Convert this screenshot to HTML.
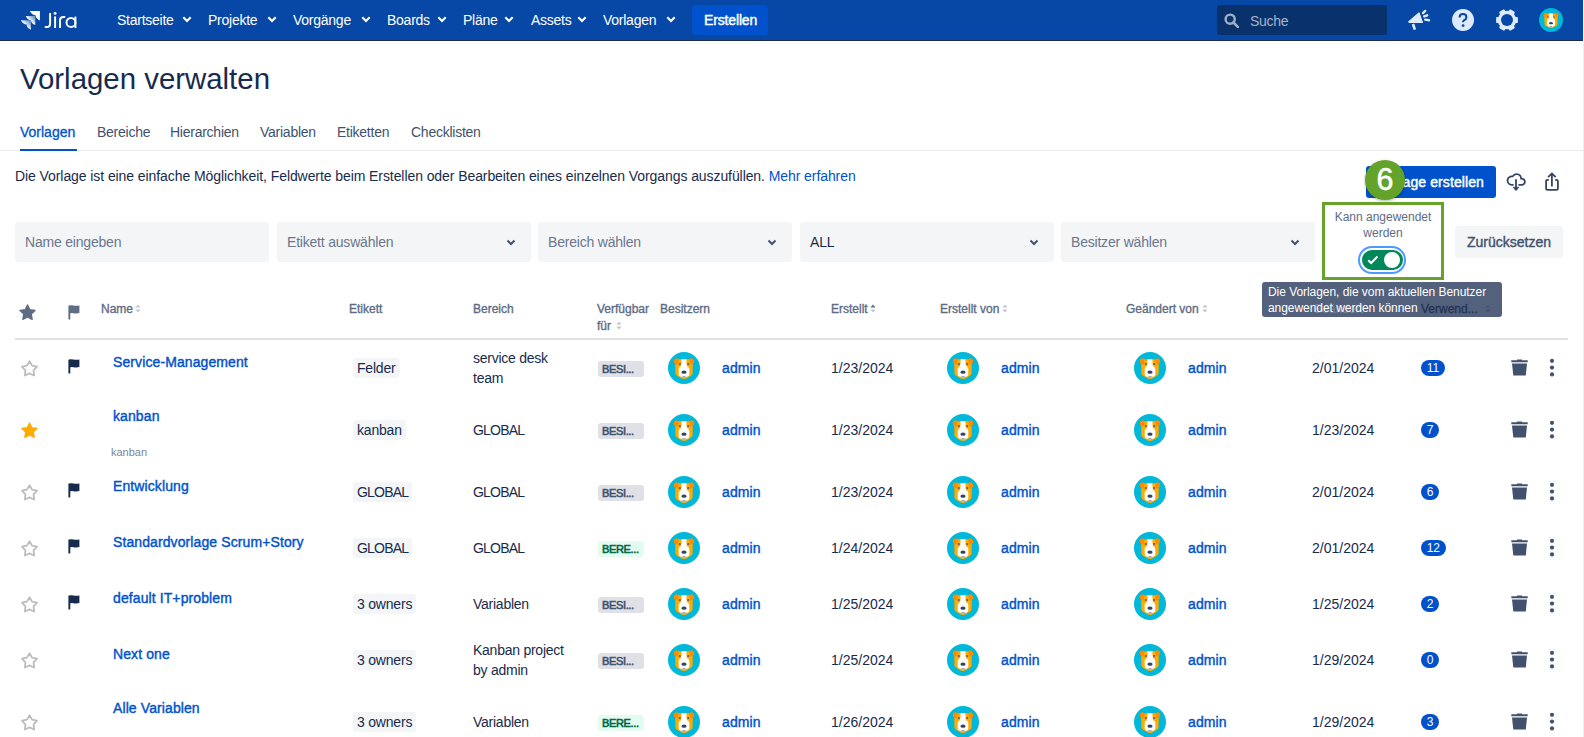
<!DOCTYPE html>
<html><head><meta charset="utf-8">
<style>
*{box-sizing:border-box;margin:0;padding:0}
html,body{width:1584px;height:737px;overflow:hidden;background:#fff;font-family:"Liberation Sans",sans-serif;color:#172B4D}
.a{position:absolute;white-space:nowrap}
#hdr{position:absolute;left:0;top:0;width:1583px;height:41px;background:#0747A6;border-bottom:1px solid #1a2d50}
.nav{position:absolute;top:12px;font-size:14px;color:#fff;line-height:16px}
.chev{position:absolute;top:16.4px}
#vscroll{position:absolute;left:1583px;top:41px;width:1px;height:696px;background:#eeeeee}
.title{left:20px;top:62px;font-size:29.4px;line-height:34px;color:#172B4D}
.tab{top:124px;font-size:14px;line-height:16px;color:#42526E;letter-spacing:-0.25px}
.desc{left:15px;top:168px;font-size:14px;line-height:16px;color:#172B4D;letter-spacing:-0.08px}
.box{position:absolute;top:222px;height:40px;width:254px;background:#F4F5F7;border-radius:3px}
.ph{position:absolute;left:10px;top:12px;font-size:14px;line-height:16px;color:#6B778C;white-space:nowrap;letter-spacing:-0.2px}
.bchev{position:absolute;right:15px;top:17px}

.th{font-size:12px;line-height:14px;color:#5E6C84;-webkit-text-stroke:0.35px #5E6C84}
.nm{font-size:14px;line-height:16px;color:#0052CC;-webkit-text-stroke:0.4px #0052CC;letter-spacing:0.1px}
.sub{font-size:11px;line-height:13px;color:#7A869A}
.td{font-size:14px;line-height:20px;color:#172B4D;letter-spacing:-0.25px}
.dt{font-size:14px;line-height:16px;color:#172B4D}
.usr{font-size:14px;line-height:16px;color:#0052CC;-webkit-text-stroke:0.4px #0052CC;letter-spacing:0.1px}
.tag{height:20px;padding:0 4px;letter-spacing:-0.2px;background:#F4F5F7;border-radius:3px;font-size:14px;line-height:20px;color:#172B4D}
.lz{height:16px;width:46px;padding-left:4px;background:#DFE1E6;border-radius:3px;font-size:11px;line-height:16px;color:#42526E;letter-spacing:-0.35px;-webkit-text-stroke:0.6px #42526E}
.lz.gr{background:#E3FCEF;color:#006644;-webkit-text-stroke:0.6px #006644}
.badge{height:16px;min-width:18px;padding:0 5.7px;background:#0052CC;border-radius:8px;font-size:12px;line-height:16px;color:#fff;text-align:center}
</style></head><body>
<div id="hdr">
  <!-- logo -->
  <svg class="a" style="left:18px;top:8px" width="26" height="26" viewBox="18 8 26 26">
    <defs><linearGradient id="lg" x1="0" y1="1" x2="1" y2="0"><stop offset="0.45" stop-color="#fff"/><stop offset="0.85" stop-color="#fff" stop-opacity="0.45"/></linearGradient></defs>
    <path d="M29.9 11.0 H39.9 V20.5 C37.3 19.3 35.7 17.8 35.6 15.3 C33.1 15.2 31.1 13.6 29.9 11.0 Z" fill="#fff"/><path d="M25.7 15.9 H35.3 V25.1 C32.7 23.9 31.1 22.7 31.0 20.2 C28.5 20.1 26.9 18.5 25.7 15.9 Z" fill="url(#lg)"/><path d="M20.9 20.2 H30.9 V29.8 C28.3 28.6 26.7 27.0 26.6 24.5 C24.1 24.4 22.1 22.8 20.9 20.2 Z" fill="url(#lg)"/>
  </svg>
  <svg class="a" style="left:40px;top:6px" width="42" height="26" viewBox="40 6 42 26">
    <g fill="none" stroke="#fff" stroke-width="1.95">
      <path d="M50.1 12.9 V23.4 Q50.1 27 46.6 27 H44.8"/>
      <path d="M55.1 16.4 V28"/>
      <path d="M60 28 V20.4 Q60 16.9 63.6 16.9 H65.2"/>
      <circle cx="71" cy="22.4" r="4.5"/>
      <path d="M75.4 16.6 V28"/>
    </g>
    <circle cx="55.1" cy="13.4" r="1.45" fill="#fff"/>
  </svg>

  <div class="a nav" style="left:117px;letter-spacing:-0.25px">Startseite</div>
  <div class="a nav" style="left:208px;letter-spacing:-0.25px">Projekte</div>
  <div class="a nav" style="left:293px;letter-spacing:-0.25px">Vorgänge</div>
  <div class="a nav" style="left:387px;letter-spacing:-0.25px">Boards</div>
  <div class="a nav" style="left:463px;letter-spacing:-0.25px">Pläne</div>
  <div class="a nav" style="left:531px;letter-spacing:-0.25px">Assets</div>
  <div class="a nav" style="left:603px;letter-spacing:-0.25px">Vorlagen</div>
  <svg class="chev" style="left:182px" width="10" height="7" viewBox="0 0 10 7"><path d="M1.3 1.3L5 5l3.7-3.7" stroke="#fff" stroke-width="2.1" fill="none"/></svg>
  <svg class="chev" style="left:267px" width="10" height="7" viewBox="0 0 10 7"><path d="M1.3 1.3L5 5l3.7-3.7" stroke="#fff" stroke-width="2.1" fill="none"/></svg>
  <svg class="chev" style="left:361px" width="10" height="7" viewBox="0 0 10 7"><path d="M1.3 1.3L5 5l3.7-3.7" stroke="#fff" stroke-width="2.1" fill="none"/></svg>
  <svg class="chev" style="left:437px" width="10" height="7" viewBox="0 0 10 7"><path d="M1.3 1.3L5 5l3.7-3.7" stroke="#fff" stroke-width="2.1" fill="none"/></svg>
  <svg class="chev" style="left:504px" width="10" height="7" viewBox="0 0 10 7"><path d="M1.3 1.3L5 5l3.7-3.7" stroke="#fff" stroke-width="2.1" fill="none"/></svg>
  <svg class="chev" style="left:577px" width="10" height="7" viewBox="0 0 10 7"><path d="M1.3 1.3L5 5l3.7-3.7" stroke="#fff" stroke-width="2.1" fill="none"/></svg>
  <svg class="chev" style="left:666px" width="10" height="7" viewBox="0 0 10 7"><path d="M1.3 1.3L5 5l3.7-3.7" stroke="#fff" stroke-width="2.1" fill="none"/></svg>
  <div class="a" style="left:692px;top:5px;width:76px;height:30px;background:#0052CC;border-radius:3px"></div>
  <div class="a nav" style="left:704px;letter-spacing:-0.15px;-webkit-text-stroke:0.45px #fff">Erstellen</div>

  <!-- search -->
  <div class="a" style="left:1217px;top:5px;width:170px;height:30px;background:#09326C;border-radius:3px"></div>
  <svg class="a" style="left:1224px;top:13px" width="16" height="15" viewBox="0 0 16 15"><circle cx="6.2" cy="6.2" r="4.6" stroke="#9FB0C8" stroke-width="2.4" fill="none"/><path d="M9.5 9.5l4.3 4.3" stroke="#9FB0C8" stroke-width="2.6" stroke-linecap="round"/></svg>
  <div class="a nav" style="left:1250px;top:13px;color:#A5B3C9;letter-spacing:-0.3px">Suche</div>
</div>
<div id="vscroll"></div>

<div class="a title">Vorlagen verwalten</div>
<div class="a tab" style="left:20px;color:#0052CC;letter-spacing:0;-webkit-text-stroke:0.3px #0052CC">Vorlagen</div>
<div class="a tab" style="left:97px">Bereiche</div>
<div class="a tab" style="left:170px">Hierarchien</div>
<div class="a tab" style="left:260px">Variablen</div>
<div class="a tab" style="left:337px">Etiketten</div>
<div class="a tab" style="left:411px">Checklisten</div>
<div class="a" style="left:0;top:149.6px;width:1583px;height:1.8px;background:#EBECF0"></div>
<div class="a" style="left:20px;top:148.8px;width:57px;height:2.6px;background:#0052CC"></div>

<div class="a desc">Die Vorlage ist eine einfache Möglichkeit, Feldwerte beim Erstellen oder Bearbeiten eines einzelnen Vorgangs auszufüllen. <span style="color:#0052CC">Mehr erfahren</span></div>

<div class="box" style="left:15px"><div class="ph">Name eingeben</div></div>
<div class="box" style="left:277px"><div class="ph">Etikett auswählen</div><svg class="bchev" width="10" height="7" viewBox="0 0 10 7"><path d="M1.5 1.5L5 5l3.5-3.5" stroke="#42526E" stroke-width="2" fill="none"/></svg></div>
<div class="box" style="left:538px"><div class="ph">Bereich wählen</div><svg class="bchev" width="10" height="7" viewBox="0 0 10 7"><path d="M1.5 1.5L5 5l3.5-3.5" stroke="#42526E" stroke-width="2" fill="none"/></svg></div>
<div class="box" style="left:800px"><div class="ph" style="color:#172B4D">ALL</div><svg class="bchev" width="10" height="7" viewBox="0 0 10 7"><path d="M1.5 1.5L5 5l3.5-3.5" stroke="#42526E" stroke-width="2" fill="none"/></svg></div>
<div class="box" style="left:1061px"><div class="ph">Besitzer wählen</div><svg class="bchev" width="10" height="7" viewBox="0 0 10 7"><path d="M1.5 1.5L5 5l3.5-3.5" stroke="#42526E" stroke-width="2" fill="none"/></svg></div>


<!-- header right icons -->
<svg class="a" style="left:1407px;top:9px" width="24" height="22" viewBox="0 0 24 22">
  <path d="M1.8 12.6 L12 4 L15.4 13.4 L2.2 13.4 Z" fill="#DEEBFF" stroke="#DEEBFF" stroke-width="1.2" stroke-linejoin="round"/>
  <path d="M6 15 L7.9 20.6" stroke="#DEEBFF" stroke-width="2.6" stroke-linecap="butt"/>
  <path d="M16 4.2 L18.2 1.9 M17.2 7.4 L20.2 6.3 M18.2 10.6 L22 11.2" stroke="#DEEBFF" stroke-width="2.4" stroke-linecap="round"/>
</svg>
<svg class="a" style="left:1452px;top:9px" width="22" height="22" viewBox="0 0 22 22">
  <circle cx="11" cy="11" r="11" fill="#DEEBFF"/>
  <path d="M7.6 8.4 Q7.6 5 11 5 Q14.4 5 14.4 8.2 Q14.4 10.2 12.2 11.2 Q11.1 11.8 11.1 13.2" stroke="#0747A6" stroke-width="2" fill="none" stroke-linecap="butt"/>
  <circle cx="11.1" cy="16.6" r="1.4" fill="#0747A6"/>
</svg>
<svg class="a" style="left:1496px;top:9px" width="22" height="22" viewBox="0 0 22 22">
  <g fill="#DEEBFF"><rect x="7.9" y="0.1" width="6.2" height="4.5" rx="1.2" transform="rotate(30 11 11)"/><rect x="7.9" y="0.1" width="6.2" height="4.5" rx="1.2" transform="rotate(90 11 11)"/><rect x="7.9" y="0.1" width="6.2" height="4.5" rx="1.2" transform="rotate(150 11 11)"/><rect x="7.9" y="0.1" width="6.2" height="4.5" rx="1.2" transform="rotate(210 11 11)"/><rect x="7.9" y="0.1" width="6.2" height="4.5" rx="1.2" transform="rotate(270 11 11)"/><rect x="7.9" y="0.1" width="6.2" height="4.5" rx="1.2" transform="rotate(330 11 11)"/><circle cx="11" cy="11" r="9.2"/></g>
  <circle cx="11" cy="11" r="6" fill="#0747A6"/>
</svg>
<svg class="a" style="left:1539px;top:8px" width="24" height="24" viewBox="0 0 32 32"><use href="#dog"/></svg>

<!-- toolbar -->
<div class="a" style="left:1366px;top:166px;width:130px;height:32px;background:#0052CC;border-radius:3px"></div>
<div class="a" style="left:1378px;top:174px;font-size:14px;line-height:16px;color:#fff;letter-spacing:0.1px;-webkit-text-stroke:0.45px #fff">Vorlage erstellen</div>
<div class="a" style="left:1365px;top:160px;width:40px;height:40px;border-radius:50%;background:#64A32A;box-shadow:0 1px 3px rgba(0,0,0,0.3)"></div>
<div class="a" style="left:1365px;top:161.3px;width:40px;text-align:center;font-size:30.5px;line-height:36px;color:#fff;-webkit-text-stroke:0.5px #fff">6</div>
<svg class="a" style="left:1505px;top:172px" width="22" height="20" viewBox="0 0 22 20">
  <path d="M8.6 12.9 H6.8 A4.3 4.3 0 1 1 7.68 4.39 A4.5 4.5 0 0 1 16.10 6.66 A3.15 3.15 0 1 1 16.7 12.9 H13.4" fill="none" stroke="#344563" stroke-width="1.8" stroke-linejoin="round"/>
  <path d="M11 7.2 V16" stroke="#344563" stroke-width="1.8"/>
  <path d="M8 15.2 H14 L11 18.8 Z" fill="#344563" stroke="#344563" stroke-width="0.6" stroke-linejoin="round"/>
</svg>
<svg class="a" style="left:1544px;top:172px" width="16" height="20" viewBox="0 0 16 20">
  <path d="M4.8 7.9 H3.4 Q2.1 7.9 2.1 9.2 V16.5 Q2.1 17.8 3.4 17.8 H12.6 Q13.9 17.8 13.9 16.5 V9.2 Q13.9 7.9 12.6 7.9 H11.2" fill="none" stroke="#344563" stroke-width="1.8"/>
  <path d="M7.9 14.6 V2" stroke="#344563" stroke-width="1.8"/>
  <path d="M4.1 5.2 L7.9 1.4 L11.7 5.2" fill="none" stroke="#344563" stroke-width="1.8"/>
</svg>

<div class="a" style="left:1322px;top:202px;width:122px;height:78px;border:3px solid #65A32A"></div>
<div class="a" style="left:1322px;top:209px;width:122px;text-align:center;white-space:normal;font-size:12px;line-height:16px;color:#5E6C84">Kann angewendet<br>werden</div>
<div class="a" style="left:1358px;top:246px;width:48px;height:28px;border:2px solid #4C9AFF;border-radius:14px"></div>
<div class="a" style="left:1361.5px;top:250px;width:41px;height:20px;background:#00875A;border-radius:10px"></div>
<div class="a" style="left:1384px;top:252px;width:16px;height:16px;background:#fff;border-radius:50%"></div>
<svg class="a" style="left:1367px;top:255px" width="12" height="10" viewBox="0 0 12 10"><path d="M1.2 5.2 L4.2 8 L10.5 1.5" fill="none" stroke="#fff" stroke-width="2"/></svg>

<div class="a" style="left:1455px;top:226px;width:108px;height:32px;background:#F4F5F7;border-radius:3px"></div>
<div class="a" style="left:1467px;top:234px;font-size:14px;line-height:16px;color:#42526E;-webkit-text-stroke:0.4px #42526E">Zurücksetzen</div>
<svg width="0" height="0" style="position:absolute"><defs><symbol id="dog" viewBox="0 0 32 32">
<circle cx="16" cy="16" r="16" fill="#00B8D9"/>
<path d="M7.2 9 Q7.4 7.2 10 7.2 H22 Q24.6 7.2 24.8 9 L24.6 21.6 Q24.4 23 22.6 24 L19.9 25.4 Q16 28.8 12.1 25.4 L9.4 24 Q7.6 23 7.4 21.6 Z" fill="#FFAB00"/>
<path d="M5.8 9.6 Q5.6 6.5 8.8 6.3 Q10.3 6.4 10.7 7.6 L9.8 12.4 Q6.2 12.5 5.8 9.6 Z M26.2 9.6 Q26.4 6.5 23.2 6.3 Q21.7 6.4 21.3 7.6 L22.2 12.4 Q25.8 12.5 26.2 9.6 Z" fill="#FF8B00"/>
<path d="M13.6 7.2 H18.4 L18.6 12.4 Q18.8 14.4 20.4 15 Q21.3 15.5 21.3 17 V22.4 Q21.3 23.8 19.8 24.4 L16 25.2 L12.2 24.4 Q10.7 23.8 10.7 22.4 V17 Q10.7 15.5 11.6 15 Q13.2 14.4 13.4 12.4 Z" fill="#fff"/>
<rect x="10.9" y="11.1" width="1.8" height="1.8" fill="#505F79"/>
<rect x="19.3" y="11.1" width="1.8" height="1.8" fill="#505F79"/>
<ellipse cx="16" cy="20.2" rx="2.6" ry="1.6" fill="#344563"/>
<path d="M14.7 23.8 Q16 25 17.3 23.8 V24.8 H14.7 Z" fill="#344563"/>
</symbol></defs></svg>
<svg class="a" style="left:18.5px;top:303.5px" width="17" height="17" viewBox="0 0 17 17"><path d="M8.50 1.00 L10.79 5.74 L16.01 6.46 L12.21 10.11 L13.14 15.29 L8.50 12.80 L3.86 15.29 L4.79 10.11 L0.99 6.46 L6.21 5.74Z" fill="#5E6C84" stroke="#5E6C84" stroke-width="1.4" stroke-linejoin="round"/></svg>
<svg class="a" style="left:67.5px;top:304.9px" width="12" height="15" viewBox="0 0 12 15"><path d="M0.4 1.1 Q0.4 0.5 1 0.5 Q3 0.1 5.6 0.6 Q8.6 1.1 11.4 0.5 V8.1 Q8.6 8.8 5.6 8.3 Q3.6 7.9 2.3 8.3 V14 Q2.3 14.5 1.35 14.5 Q0.4 14.5 0.4 14 Z" fill="#5E6C84"/></svg>
<div class="a th" style="left:101px;top:302px;">Name</div>
<svg class="a" style="left:135px;top:304px" width="6" height="9" viewBox="0 0 6 9"><path d="M3 0.5L5.6 3.5H0.4Z" fill="#C1C7D0"/><path d="M3 8.5L5.6 5.5H0.4Z" fill="#C1C7D0"/></svg>
<div class="a th" style="left:349px;top:302px;">Etikett</div>
<div class="a th" style="left:473px;top:302px;">Bereich</div>
<div class="a th" style="left:597px;top:301px;line-height:17px;">Verfügbar<br>für</div>
<svg class="a" style="left:616px;top:321px" width="6" height="9" viewBox="0 0 6 9"><path d="M3 0.5L5.6 3.5H0.4Z" fill="#C1C7D0"/><path d="M3 8.5L5.6 5.5H0.4Z" fill="#C1C7D0"/></svg>
<div class="a th" style="left:660px;top:302px;">Besitzern</div>
<div class="a th" style="left:831px;top:302px;">Erstellt</div>
<svg class="a" style="left:870px;top:304px" width="6" height="9" viewBox="0 0 6 9"><path d="M3 0.5L5.6 3.5H0.4Z" fill="#5E6C84"/><path d="M3 8.5L5.6 5.5H0.4Z" fill="#C1C7D0"/></svg>
<div class="a th" style="left:940px;top:302px;">Erstellt von</div>
<svg class="a" style="left:1002px;top:304px" width="6" height="9" viewBox="0 0 6 9"><path d="M3 0.5L5.6 3.5H0.4Z" fill="#C1C7D0"/><path d="M3 8.5L5.6 5.5H0.4Z" fill="#C1C7D0"/></svg>
<div class="a th" style="left:1126px;top:302px;">Geändert von</div>
<svg class="a" style="left:1202px;top:304px" width="6" height="9" viewBox="0 0 6 9"><path d="M3 0.5L5.6 3.5H0.4Z" fill="#C1C7D0"/><path d="M3 8.5L5.6 5.5H0.4Z" fill="#C1C7D0"/></svg>
<div class="a" style="left:15px;top:338px;width:1553px;height:2px;background:#DFE1E6"></div>
<svg class="a" style="left:21px;top:360px" width="17" height="17" viewBox="0 0 17 17"><path d="M8.50 1.20 L11.03 5.62 L16.01 6.66 L12.59 10.43 L13.14 15.49 L8.50 13.40 L3.86 15.49 L4.41 10.43 L0.99 6.66 L5.97 5.62Z" fill="none" stroke="#BBBDC0" stroke-width="1.8" stroke-linejoin="round"/></svg>
<svg class="a" style="left:67.5px;top:358.8px" width="12" height="15" viewBox="0 0 12 15"><path d="M0.4 1.1 Q0.4 0.5 1 0.5 Q3 0.1 5.6 0.6 Q8.6 1.1 11.4 0.5 V8.1 Q8.6 8.8 5.6 8.3 Q3.6 7.9 2.3 8.3 V14 Q2.3 14.5 1.35 14.5 Q0.4 14.5 0.4 14 Z" fill="#172B4D"/></svg>
<div class="a nm" style="left:113px;top:354px;">Service-Management</div>
<div class="a tag" style="left:353px;top:358px">Felder</div>
<div class="a td" style="left:473px;top:348px;">service desk<br>team</div>
<div class="a lz" style="left:598px;top:361px">BESI...</div>
<svg class="a" style="left:668px;top:352px" width="32" height="32" viewBox="0 0 32 32"><use href="#dog"/></svg>
<div class="a usr" style="left:722px;top:360px;">admin</div>
<div class="a dt" style="left:831px;top:360px;">1/23/2024</div>
<svg class="a" style="left:947px;top:352px" width="32" height="32" viewBox="0 0 32 32"><use href="#dog"/></svg>
<div class="a usr" style="left:1001px;top:360px;">admin</div>
<svg class="a" style="left:1134px;top:352px" width="32" height="32" viewBox="0 0 32 32"><use href="#dog"/></svg>
<div class="a usr" style="left:1188px;top:360px;">admin</div>
<div class="a dt" style="left:1312px;top:360px;">2/01/2024</div>
<div class="a badge" style="left:1421px;top:360px">11</div>
<svg class="a" style="left:1511px;top:359px" width="17" height="17" viewBox="0 0 17 17"><path d="M6 0.4h5v1.4h-5z M0.3 1.3h16.4v1.9H0.3z M1 4.6h15l-1.2 12H2.3z" fill="#42526E"/></svg>
<svg class="a" style="left:1549px;top:358px" width="6" height="19" viewBox="0 0 6 19"><circle cx="3" cy="2.8" r="2.1" fill="#42526E"/><circle cx="3" cy="9.6" r="2.1" fill="#42526E"/><circle cx="3" cy="16.4" r="2.1" fill="#42526E"/></svg>
<svg class="a" style="left:21px;top:422px" width="17" height="17" viewBox="0 0 17 17"><path d="M8.50 1.00 L10.79 5.74 L16.01 6.46 L12.21 10.11 L13.14 15.29 L8.50 12.80 L3.86 15.29 L4.79 10.11 L0.99 6.46 L6.21 5.74Z" fill="#FFAB00" stroke="#FFAB00" stroke-width="1.4" stroke-linejoin="round"/></svg>
<div class="a nm" style="left:113px;top:408px;">kanban</div>
<div class="a sub" style="left:111px;top:446px;">kanban</div>
<div class="a tag" style="left:353px;top:420px">kanban</div>
<div class="a td" style="left:473px;top:420px;letter-spacing:-0.8px;">GLOBAL</div>
<div class="a lz" style="left:598px;top:423px">BESI...</div>
<svg class="a" style="left:668px;top:414px" width="32" height="32" viewBox="0 0 32 32"><use href="#dog"/></svg>
<div class="a usr" style="left:722px;top:422px;">admin</div>
<div class="a dt" style="left:831px;top:422px;">1/23/2024</div>
<svg class="a" style="left:947px;top:414px" width="32" height="32" viewBox="0 0 32 32"><use href="#dog"/></svg>
<div class="a usr" style="left:1001px;top:422px;">admin</div>
<svg class="a" style="left:1134px;top:414px" width="32" height="32" viewBox="0 0 32 32"><use href="#dog"/></svg>
<div class="a usr" style="left:1188px;top:422px;">admin</div>
<div class="a dt" style="left:1312px;top:422px;">1/23/2024</div>
<div class="a badge" style="left:1421px;top:422px">7</div>
<svg class="a" style="left:1511px;top:421px" width="17" height="17" viewBox="0 0 17 17"><path d="M6 0.4h5v1.4h-5z M0.3 1.3h16.4v1.9H0.3z M1 4.6h15l-1.2 12H2.3z" fill="#42526E"/></svg>
<svg class="a" style="left:1549px;top:420px" width="6" height="19" viewBox="0 0 6 19"><circle cx="3" cy="2.8" r="2.1" fill="#42526E"/><circle cx="3" cy="9.6" r="2.1" fill="#42526E"/><circle cx="3" cy="16.4" r="2.1" fill="#42526E"/></svg>
<svg class="a" style="left:21px;top:484px" width="17" height="17" viewBox="0 0 17 17"><path d="M8.50 1.20 L11.03 5.62 L16.01 6.66 L12.59 10.43 L13.14 15.49 L8.50 13.40 L3.86 15.49 L4.41 10.43 L0.99 6.66 L5.97 5.62Z" fill="none" stroke="#BBBDC0" stroke-width="1.8" stroke-linejoin="round"/></svg>
<svg class="a" style="left:67.5px;top:482.8px" width="12" height="15" viewBox="0 0 12 15"><path d="M0.4 1.1 Q0.4 0.5 1 0.5 Q3 0.1 5.6 0.6 Q8.6 1.1 11.4 0.5 V8.1 Q8.6 8.8 5.6 8.3 Q3.6 7.9 2.3 8.3 V14 Q2.3 14.5 1.35 14.5 Q0.4 14.5 0.4 14 Z" fill="#172B4D"/></svg>
<div class="a nm" style="left:113px;top:478px;">Entwicklung</div>
<div class="a tag" style="left:353px;top:482px"><span style="letter-spacing:-0.8px">GLOBAL</span></div>
<div class="a td" style="left:473px;top:482px;letter-spacing:-0.8px;">GLOBAL</div>
<div class="a lz" style="left:598px;top:485px">BESI...</div>
<svg class="a" style="left:668px;top:476px" width="32" height="32" viewBox="0 0 32 32"><use href="#dog"/></svg>
<div class="a usr" style="left:722px;top:484px;">admin</div>
<div class="a dt" style="left:831px;top:484px;">1/23/2024</div>
<svg class="a" style="left:947px;top:476px" width="32" height="32" viewBox="0 0 32 32"><use href="#dog"/></svg>
<div class="a usr" style="left:1001px;top:484px;">admin</div>
<svg class="a" style="left:1134px;top:476px" width="32" height="32" viewBox="0 0 32 32"><use href="#dog"/></svg>
<div class="a usr" style="left:1188px;top:484px;">admin</div>
<div class="a dt" style="left:1312px;top:484px;">2/01/2024</div>
<div class="a badge" style="left:1421px;top:484px">6</div>
<svg class="a" style="left:1511px;top:483px" width="17" height="17" viewBox="0 0 17 17"><path d="M6 0.4h5v1.4h-5z M0.3 1.3h16.4v1.9H0.3z M1 4.6h15l-1.2 12H2.3z" fill="#42526E"/></svg>
<svg class="a" style="left:1549px;top:482px" width="6" height="19" viewBox="0 0 6 19"><circle cx="3" cy="2.8" r="2.1" fill="#42526E"/><circle cx="3" cy="9.6" r="2.1" fill="#42526E"/><circle cx="3" cy="16.4" r="2.1" fill="#42526E"/></svg>
<svg class="a" style="left:21px;top:540px" width="17" height="17" viewBox="0 0 17 17"><path d="M8.50 1.20 L11.03 5.62 L16.01 6.66 L12.59 10.43 L13.14 15.49 L8.50 13.40 L3.86 15.49 L4.41 10.43 L0.99 6.66 L5.97 5.62Z" fill="none" stroke="#BBBDC0" stroke-width="1.8" stroke-linejoin="round"/></svg>
<svg class="a" style="left:67.5px;top:538.8px" width="12" height="15" viewBox="0 0 12 15"><path d="M0.4 1.1 Q0.4 0.5 1 0.5 Q3 0.1 5.6 0.6 Q8.6 1.1 11.4 0.5 V8.1 Q8.6 8.8 5.6 8.3 Q3.6 7.9 2.3 8.3 V14 Q2.3 14.5 1.35 14.5 Q0.4 14.5 0.4 14 Z" fill="#172B4D"/></svg>
<div class="a nm" style="left:113px;top:534px;">Standardvorlage Scrum+Story</div>
<div class="a tag" style="left:353px;top:538px"><span style="letter-spacing:-0.8px">GLOBAL</span></div>
<div class="a td" style="left:473px;top:538px;letter-spacing:-0.8px;">GLOBAL</div>
<div class="a lz gr" style="left:598px;top:541px">BERE...</div>
<svg class="a" style="left:668px;top:532px" width="32" height="32" viewBox="0 0 32 32"><use href="#dog"/></svg>
<div class="a usr" style="left:722px;top:540px;">admin</div>
<div class="a dt" style="left:831px;top:540px;">1/24/2024</div>
<svg class="a" style="left:947px;top:532px" width="32" height="32" viewBox="0 0 32 32"><use href="#dog"/></svg>
<div class="a usr" style="left:1001px;top:540px;">admin</div>
<svg class="a" style="left:1134px;top:532px" width="32" height="32" viewBox="0 0 32 32"><use href="#dog"/></svg>
<div class="a usr" style="left:1188px;top:540px;">admin</div>
<div class="a dt" style="left:1312px;top:540px;">2/01/2024</div>
<div class="a badge" style="left:1421px;top:540px">12</div>
<svg class="a" style="left:1511px;top:539px" width="17" height="17" viewBox="0 0 17 17"><path d="M6 0.4h5v1.4h-5z M0.3 1.3h16.4v1.9H0.3z M1 4.6h15l-1.2 12H2.3z" fill="#42526E"/></svg>
<svg class="a" style="left:1549px;top:538px" width="6" height="19" viewBox="0 0 6 19"><circle cx="3" cy="2.8" r="2.1" fill="#42526E"/><circle cx="3" cy="9.6" r="2.1" fill="#42526E"/><circle cx="3" cy="16.4" r="2.1" fill="#42526E"/></svg>
<svg class="a" style="left:21px;top:596px" width="17" height="17" viewBox="0 0 17 17"><path d="M8.50 1.20 L11.03 5.62 L16.01 6.66 L12.59 10.43 L13.14 15.49 L8.50 13.40 L3.86 15.49 L4.41 10.43 L0.99 6.66 L5.97 5.62Z" fill="none" stroke="#BBBDC0" stroke-width="1.8" stroke-linejoin="round"/></svg>
<svg class="a" style="left:67.5px;top:594.8px" width="12" height="15" viewBox="0 0 12 15"><path d="M0.4 1.1 Q0.4 0.5 1 0.5 Q3 0.1 5.6 0.6 Q8.6 1.1 11.4 0.5 V8.1 Q8.6 8.8 5.6 8.3 Q3.6 7.9 2.3 8.3 V14 Q2.3 14.5 1.35 14.5 Q0.4 14.5 0.4 14 Z" fill="#172B4D"/></svg>
<div class="a nm" style="left:113px;top:590px;">default IT+problem</div>
<div class="a tag" style="left:353px;top:594px">3 owners</div>
<div class="a td" style="left:473px;top:594px;">Variablen</div>
<div class="a lz" style="left:598px;top:597px">BESI...</div>
<svg class="a" style="left:668px;top:588px" width="32" height="32" viewBox="0 0 32 32"><use href="#dog"/></svg>
<div class="a usr" style="left:722px;top:596px;">admin</div>
<div class="a dt" style="left:831px;top:596px;">1/25/2024</div>
<svg class="a" style="left:947px;top:588px" width="32" height="32" viewBox="0 0 32 32"><use href="#dog"/></svg>
<div class="a usr" style="left:1001px;top:596px;">admin</div>
<svg class="a" style="left:1134px;top:588px" width="32" height="32" viewBox="0 0 32 32"><use href="#dog"/></svg>
<div class="a usr" style="left:1188px;top:596px;">admin</div>
<div class="a dt" style="left:1312px;top:596px;">1/25/2024</div>
<div class="a badge" style="left:1421px;top:596px">2</div>
<svg class="a" style="left:1511px;top:595px" width="17" height="17" viewBox="0 0 17 17"><path d="M6 0.4h5v1.4h-5z M0.3 1.3h16.4v1.9H0.3z M1 4.6h15l-1.2 12H2.3z" fill="#42526E"/></svg>
<svg class="a" style="left:1549px;top:594px" width="6" height="19" viewBox="0 0 6 19"><circle cx="3" cy="2.8" r="2.1" fill="#42526E"/><circle cx="3" cy="9.6" r="2.1" fill="#42526E"/><circle cx="3" cy="16.4" r="2.1" fill="#42526E"/></svg>
<svg class="a" style="left:21px;top:652px" width="17" height="17" viewBox="0 0 17 17"><path d="M8.50 1.20 L11.03 5.62 L16.01 6.66 L12.59 10.43 L13.14 15.49 L8.50 13.40 L3.86 15.49 L4.41 10.43 L0.99 6.66 L5.97 5.62Z" fill="none" stroke="#BBBDC0" stroke-width="1.8" stroke-linejoin="round"/></svg>
<div class="a nm" style="left:113px;top:646px;">Next one</div>
<div class="a tag" style="left:353px;top:650px">3 owners</div>
<div class="a td" style="left:473px;top:640px;">Kanban project<br>by admin</div>
<div class="a lz" style="left:598px;top:653px">BESI...</div>
<svg class="a" style="left:668px;top:644px" width="32" height="32" viewBox="0 0 32 32"><use href="#dog"/></svg>
<div class="a usr" style="left:722px;top:652px;">admin</div>
<div class="a dt" style="left:831px;top:652px;">1/25/2024</div>
<svg class="a" style="left:947px;top:644px" width="32" height="32" viewBox="0 0 32 32"><use href="#dog"/></svg>
<div class="a usr" style="left:1001px;top:652px;">admin</div>
<svg class="a" style="left:1134px;top:644px" width="32" height="32" viewBox="0 0 32 32"><use href="#dog"/></svg>
<div class="a usr" style="left:1188px;top:652px;">admin</div>
<div class="a dt" style="left:1312px;top:652px;">1/29/2024</div>
<div class="a badge" style="left:1421px;top:652px">0</div>
<svg class="a" style="left:1511px;top:651px" width="17" height="17" viewBox="0 0 17 17"><path d="M6 0.4h5v1.4h-5z M0.3 1.3h16.4v1.9H0.3z M1 4.6h15l-1.2 12H2.3z" fill="#42526E"/></svg>
<svg class="a" style="left:1549px;top:650px" width="6" height="19" viewBox="0 0 6 19"><circle cx="3" cy="2.8" r="2.1" fill="#42526E"/><circle cx="3" cy="9.6" r="2.1" fill="#42526E"/><circle cx="3" cy="16.4" r="2.1" fill="#42526E"/></svg>
<svg class="a" style="left:21px;top:714px" width="17" height="17" viewBox="0 0 17 17"><path d="M8.50 1.20 L11.03 5.62 L16.01 6.66 L12.59 10.43 L13.14 15.49 L8.50 13.40 L3.86 15.49 L4.41 10.43 L0.99 6.66 L5.97 5.62Z" fill="none" stroke="#BBBDC0" stroke-width="1.8" stroke-linejoin="round"/></svg>
<div class="a nm" style="left:113px;top:700px;">Alle Variablen</div>
<div class="a tag" style="left:353px;top:712px">3 owners</div>
<div class="a td" style="left:473px;top:712px;">Variablen</div>
<div class="a lz gr" style="left:598px;top:715px">BERE...</div>
<svg class="a" style="left:668px;top:706px" width="32" height="32" viewBox="0 0 32 32"><use href="#dog"/></svg>
<div class="a usr" style="left:722px;top:714px;">admin</div>
<div class="a dt" style="left:831px;top:714px;">1/26/2024</div>
<svg class="a" style="left:947px;top:706px" width="32" height="32" viewBox="0 0 32 32"><use href="#dog"/></svg>
<div class="a usr" style="left:1001px;top:714px;">admin</div>
<svg class="a" style="left:1134px;top:706px" width="32" height="32" viewBox="0 0 32 32"><use href="#dog"/></svg>
<div class="a usr" style="left:1188px;top:714px;">admin</div>
<div class="a dt" style="left:1312px;top:714px;">1/29/2024</div>
<div class="a badge" style="left:1421px;top:714px">3</div>
<svg class="a" style="left:1511px;top:713px" width="17" height="17" viewBox="0 0 17 17"><path d="M6 0.4h5v1.4h-5z M0.3 1.3h16.4v1.9H0.3z M1 4.6h15l-1.2 12H2.3z" fill="#42526E"/></svg>
<svg class="a" style="left:1549px;top:712px" width="6" height="19" viewBox="0 0 6 19"><circle cx="3" cy="2.8" r="2.1" fill="#42526E"/><circle cx="3" cy="9.6" r="2.1" fill="#42526E"/><circle cx="3" cy="16.4" r="2.1" fill="#42526E"/></svg>

<div class="a" style="left:1262px;top:282px;width:240px;height:35px;background:#53617C;border-radius:3px"></div>
<div class="a th" style="left:1313px;top:302px;color:rgba(255,255,255,0.16);-webkit-text-stroke:0.35px rgba(255,255,255,0.16)">Geändert</div>
<div class="a th" style="left:1421px;top:302px;color:rgba(23,43,77,0.8);-webkit-text-stroke:0.35px rgba(23,43,77,0.8)">Verwend...</div>
<svg class="a" style="left:1485px;top:304px" width="6" height="9" viewBox="0 0 6 9"><path d="M3 0.5L5.6 3.5H0.4Z M3 8.5L5.6 5.5H0.4Z" fill="rgba(23,43,77,0.25)"/></svg>
<div class="a" style="left:1268px;top:284px;font-size:12px;line-height:16px;color:#fff;letter-spacing:-0.05px">Die Vorlagen, die vom aktuellen Benutzer<br>angewendet werden können</div>

</body></html>
